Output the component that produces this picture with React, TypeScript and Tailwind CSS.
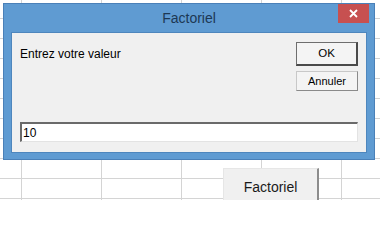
export default function App() {
  return (
    <div className="relative h-[200px] w-[380px] overflow-hidden bg-white bg-[image:linear-gradient(to_right,#d4d4d4_1px,transparent_1px),linear-gradient(to_bottom,#d4d4d4_1px,transparent_1px)] bg-[size:80px_20px] bg-[position:21px_18px] font-['Liberation_Sans',Arial,sans-serif]">
      {/* sheet button */}
      <button className="absolute left-[223px] top-[168px] flex h-[36px] w-[96px] items-start justify-center border-t border-l border-[#e6e6e6] border-r-2 border-b-2 border-r-[#8c8c8c] border-b-[#8c8c8c] bg-[#f0f0f0] pt-[8px] text-[14px] text-[#1a1a1a]">
        Factoriel
      </button>

      {/* dialog window */}
      <div className="absolute left-[3px] top-[3px] flex h-[157px] w-[372px] flex-col border border-[#4a80b8] bg-[#5f9bd2]">
        <div className="relative flex h-[28px] items-center justify-center">
          <span className="pt-[1px] text-[14px] text-[#1d3854]">Factoriel</span>
          <div className="absolute right-[5px] top-0 flex h-[19px] w-[31px] items-center justify-center bg-[#c75050]">
            <svg width="9" height="9" viewBox="0 0 9 9">
              <path d="M1 1L8 8M8 1L1 8" stroke="white" strokeWidth="1.8" />
            </svg>
          </div>
        </div>
        <div className="mx-[7px] mb-[6px] flex flex-1 flex-col border border-[#4e86bd] bg-[#f0f0f0] px-[8px] pt-[9px]">
          <div className="flex">
            <div className="flex-1 pt-[3px] text-[12px] text-black">Entrez votre valeur</div>
            <div className="flex w-[62px] flex-col gap-[5px]">
              <button className="flex h-[24px] items-center justify-center border border-[#6e6e6e] border-r-2 border-b-2 border-r-[#4a4a4a] border-b-[#4a4a4a] bg-[#f4f4f4] text-[11.5px] text-black">
                OK
              </button>
              <button className="flex h-[20px] items-center justify-center border border-[#c8c8c8] border-r-[#8a8a8a] border-b-[#8a8a8a] bg-[#f4f4f4] text-[11px] text-black">
                Annuler
              </button>
            </div>
          </div>
          <div className="mt-auto mb-[10px] flex h-[20px] items-center border-t-2 border-l-2 border-t-[#6a6a6a] border-l-[#6a6a6a] border-r border-b border-r-[#e3e3e3] border-b-[#e3e3e3] bg-white pl-[1px] text-[12px] text-black">
            10
          </div>
        </div>
      </div>
    </div>
  )
}
